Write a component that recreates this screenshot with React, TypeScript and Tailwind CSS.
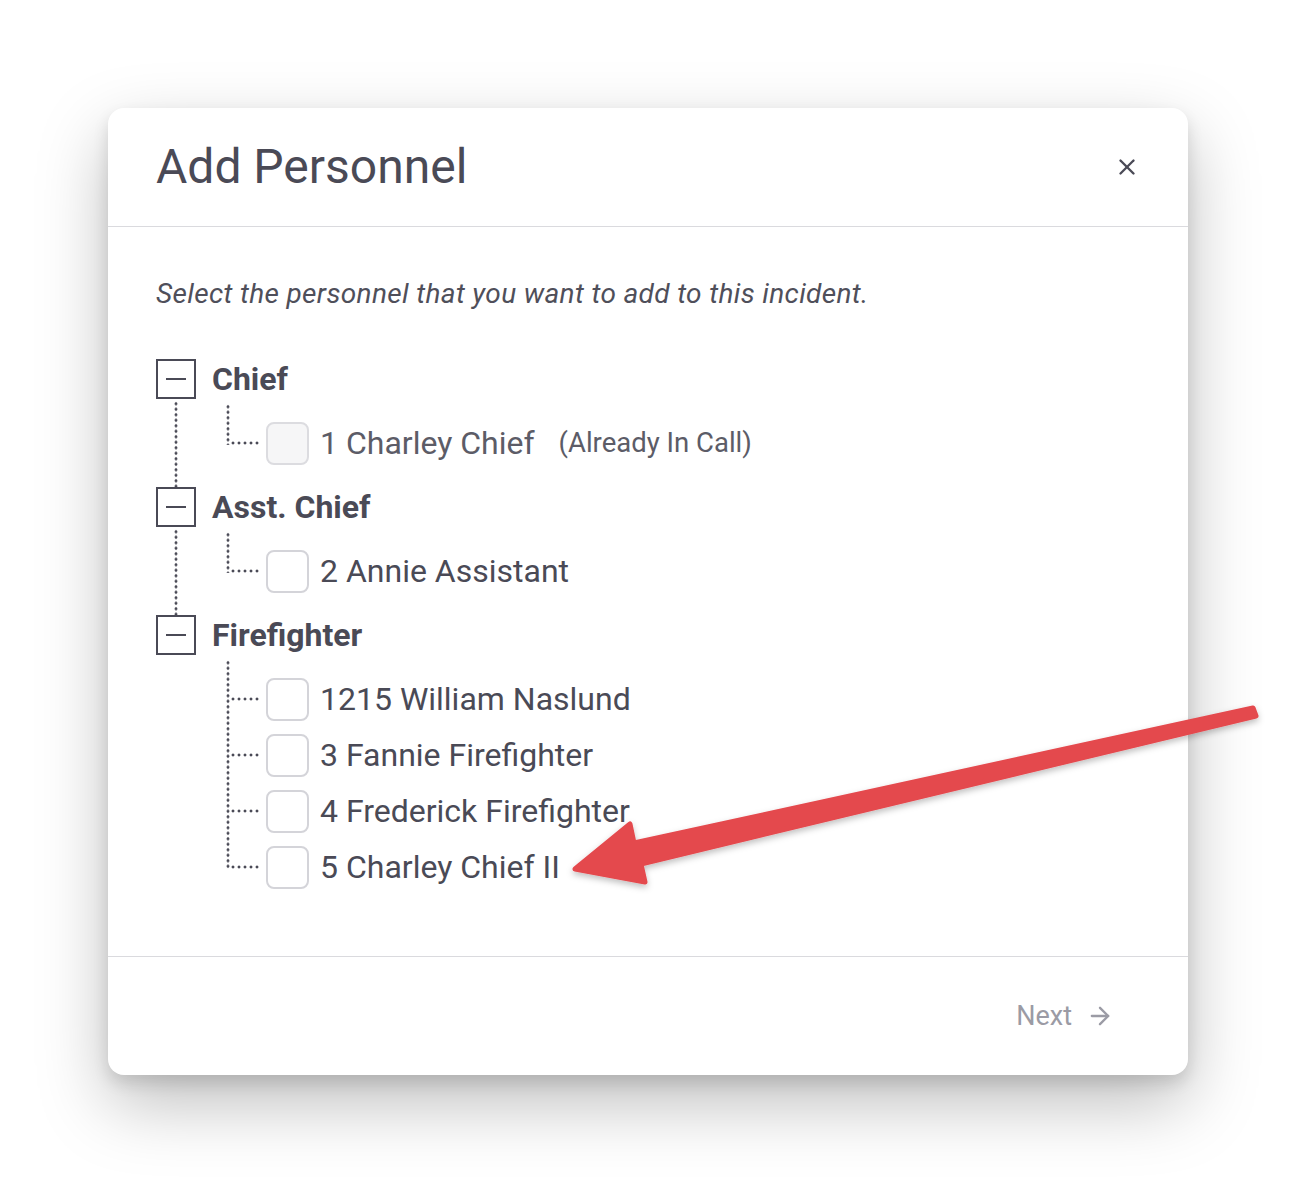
import { X, ArrowRight } from "lucide-react";

type Person = { label: string; disabled?: boolean; note?: string };
type Group = { title: string; people: Person[] };

const groups: Group[] = [
  { title: "Chief", people: [{ label: "1 Charley Chief", disabled: true, note: "(Already In Call)" }] },
  { title: "Asst. Chief", people: [{ label: "2 Annie Assistant" }] },
  {
    title: "Firefighter",
    people: [
      { label: "1215 William Naslund" },
      { label: "3 Fannie Firefighter" },
      { label: "4 Frederick Firefighter" },
      { label: "5 Charley Chief II" },
    ],
  },
];

export default function App() {
  return (
    <div className="relative min-h-[1184px] w-[1296px] bg-white pl-[108px] pt-[108px] font-['Roboto',sans-serif] text-[#4a4a56]">
      <div className="w-[1080px] rounded-2xl bg-white shadow-[0_8px_16px_rgba(0,0,0,0.12),0_28px_70px_rgba(0,0,0,0.26)]">
        {/* Header */}
        <div className="flex h-[119px] items-center justify-between border-b border-[#dadade] pl-[48px] pr-[48px]">
          <h2 className="text-[48px] font-normal leading-none">Add Personnel</h2>
          <X className="h-[26px] w-[26px] text-[#4a4a56]" strokeWidth={2.2} />
        </div>

        {/* Body */}
        <div className="pl-[48px] pr-[48px] pb-[61px] pt-[48px]">
          <p className="text-[28px] italic leading-[38px] tracking-[0.35px] text-[#4f4f5a]">
            Select the personnel that you want to add to this incident.
          </p>

          <div className="mt-[30px]">
            {groups.map((g, gi) => (
              <div key={g.title}>
                <div className="flex h-[72px] items-center">
                  <div className="flex h-10 w-10 items-center justify-center border-2 border-[#4a4a56]">
                    <div className="h-[2px] w-5 bg-[#4a4a56]" />
                  </div>
                  <span className="ml-4 text-[32px] font-bold leading-none">{g.title}</span>
                </div>
                <div className="relative">
                  {gi < groups.length - 1 && (
                    <div className="absolute left-[18px] top-[-14px] bottom-[-16px] w-[4px] bg-[radial-gradient(circle,#4a4a56_1.3px,transparent_1.7px)] bg-[length:4px_5.5px] bg-repeat-y" />
                  )}
                  <div className="absolute left-[70px] top-[-11px] bottom-[26px] w-[4px] bg-[radial-gradient(circle,#4a4a56_1.3px,transparent_1.7px)] bg-[length:4px_5.5px] bg-repeat-y" />
                  {g.people.map((p) => (
                    <div key={p.label} className="flex h-14 items-center pl-[74px]">
                      <div className="h-[4px] w-[29px] bg-[radial-gradient(circle,#4a4a56_1.3px,transparent_1.7px)] bg-[length:6px_4px] bg-repeat-x" />
                      <div
                        className={`ml-[7px] h-[43px] w-[43px] rounded-lg border-2 ${
                          p.disabled ? "border-[#dcdce0] bg-[#f6f6f7]" : "border-[#d4d4d9] bg-white"
                        }`}
                      />
                      <span
                        className={`ml-[11px] text-[32px] leading-none ${
                          p.disabled ? "text-[#5c5c67]" : "text-[#4a4a56]"
                        }`}
                      >
                        {p.label}
                      </span>
                      {p.note && (
                        <span className="ml-[24px] text-[27.5px] leading-none text-[#5c5c67]">{p.note}</span>
                      )}
                    </div>
                  ))}
                </div>
              </div>
            ))}
          </div>
        </div>

        {/* Footer */}
        <div className="flex h-[119px] items-center justify-end border-t border-[#dadade] pr-[74px]">
          <button type="button" className="flex items-center gap-[14px] text-[27px] text-[#9b9ba5]">
            Next
            <ArrowRight className="h-[28px] w-[28px]" strokeWidth={2} />
          </button>
        </div>
      </div>

      {/* Annotation arrow */}
      <svg
        className="pointer-events-none absolute left-0 top-0"
        width="1296"
        height="1184"
        viewBox="0 0 1296 1184"
      >
        <defs>
          <filter id="arrowShadow" x="-10%" y="-10%" width="120%" height="130%">
            <feDropShadow dx="0" dy="3" stdDeviation="3" floodColor="#000" floodOpacity="0.25" />
          </filter>
        </defs>
        <polygon
          points="1253,708 1256,716 641,864 645,882 575,869 630,824 634,843"
          fill="#e4494e"
          stroke="#e4494e"
          strokeWidth="5"
          strokeLinejoin="round"
          filter="url(#arrowShadow)"
        />
      </svg>
    </div>
  );
}
